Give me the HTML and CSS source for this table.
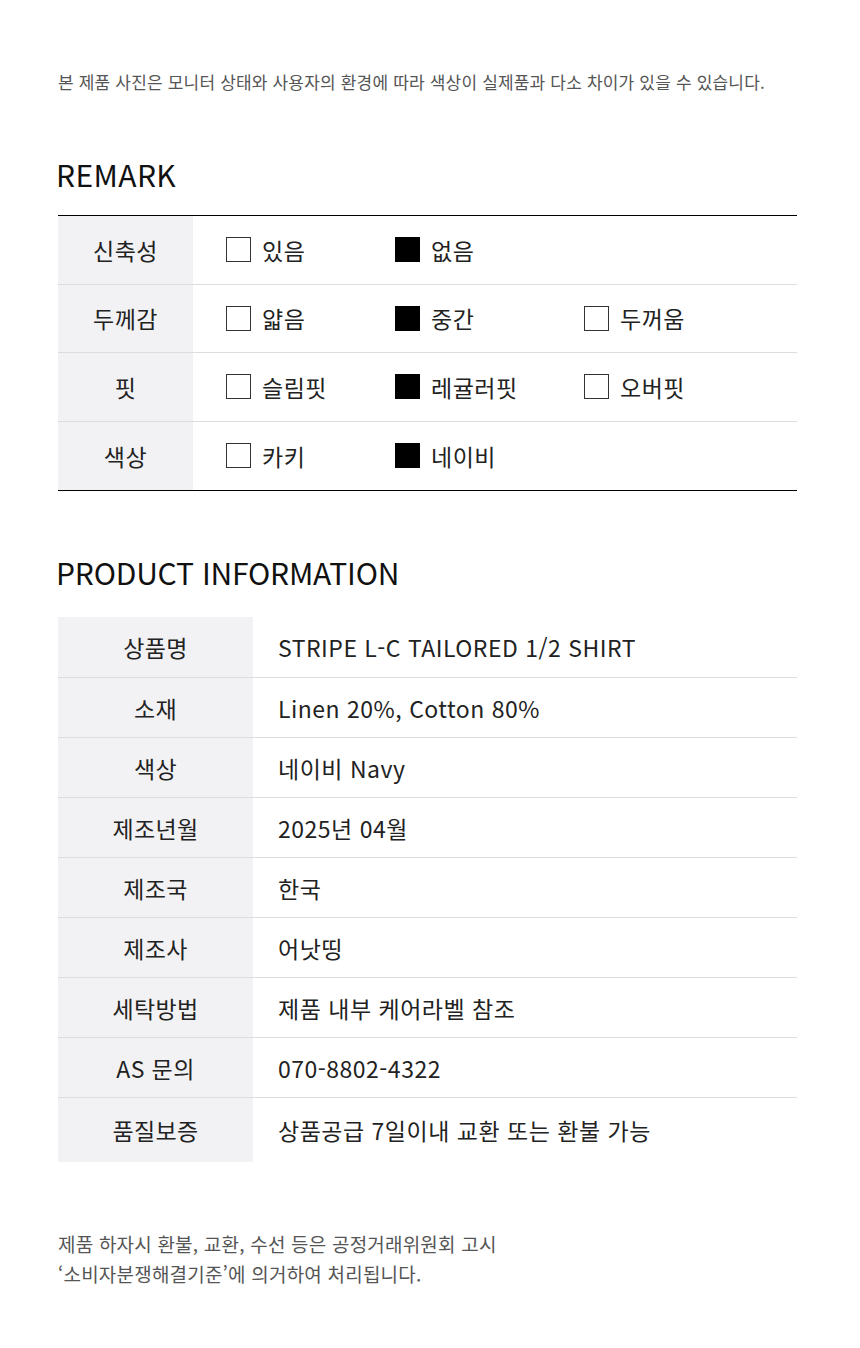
FILE: index.html
```html
<!DOCTYPE html>
<html lang="ko">
<head>
<meta charset="utf-8">
<link rel="stylesheet" href="styles.css">
</head>
<body>
<div class="page">
  <p class="notice">본 제품 사진은 모니터 상태와 사용자의 환경에 따라 색상이 실제품과 다소 차이가 있을 수 있습니다.</p>

  <h2 class="title remark-title">REMARK</h2>
  <div class="remark">
    <div class="r-row">
      <div class="r-label">신축성</div>
      <div class="r-opts">
        <span class="opt"><i class="box"></i>있음</span>
        <span class="opt"><i class="box on"></i>없음</span>
      </div>
    </div>
    <div class="r-row">
      <div class="r-label">두께감</div>
      <div class="r-opts">
        <span class="opt"><i class="box"></i>얇음</span>
        <span class="opt"><i class="box on"></i>중간</span>
        <span class="opt"><i class="box"></i>두꺼움</span>
      </div>
    </div>
    <div class="r-row">
      <div class="r-label">핏</div>
      <div class="r-opts">
        <span class="opt"><i class="box"></i>슬림핏</span>
        <span class="opt"><i class="box on"></i>레귤러핏</span>
        <span class="opt"><i class="box"></i>오버핏</span>
      </div>
    </div>
    <div class="r-row">
      <div class="r-label">색상</div>
      <div class="r-opts">
        <span class="opt"><i class="box"></i>카키</span>
        <span class="opt"><i class="box on"></i>네이비</span>
      </div>
    </div>
  </div>

  <h2 class="title info-title">PRODUCT INFORMATION</h2>
  <div class="info">
    <div class="i-row"><div class="i-label">상품명</div><div class="i-val">STRIPE L-C TAILORED 1/2 SHIRT</div></div>
    <div class="i-row"><div class="i-label">소재</div><div class="i-val">Linen 20%, Cotton 80%</div></div>
    <div class="i-row"><div class="i-label">색상</div><div class="i-val">네이비 Navy</div></div>
    <div class="i-row"><div class="i-label">제조년월</div><div class="i-val">2025년 04월</div></div>
    <div class="i-row"><div class="i-label">제조국</div><div class="i-val">한국</div></div>
    <div class="i-row"><div class="i-label">제조사</div><div class="i-val">어낫띵</div></div>
    <div class="i-row"><div class="i-label">세탁방법</div><div class="i-val">제품 내부 케어라벨 참조</div></div>
    <div class="i-row"><div class="i-label">AS 문의</div><div class="i-val">070-8802-4322</div></div>
    <div class="i-row last"><div class="i-label">품질보증</div><div class="i-val">상품공급 7일이내 교환 또는 환불 가능</div></div>
  </div>

  <p class="footnote">제품 하자시 환불, 교환, 수선 등은 공정거래위원회 고시<br>‘소비자분쟁해결기준’에 의거하여 처리됩니다.</p>
</div>
</body>
</html>
```

FILE: styles.css
```css
* { box-sizing: border-box; }
html, body { margin: 0; padding: 0; background: #fff; }
body {
  font-family: "Noto Sans CJK KR", "Noto Sans", sans-serif;
  color: #222;
}
.page {
  width: 860px;
  padding: 68px 63px 0 58px;
}
.notice {
  margin: 0;
  font-size: 17px;
  line-height: 28px;
  color: #555;
  letter-spacing: 0.18px;
}
.title {
  margin: 0 0 0 -2px;
  font-weight: 400;
  font-size: 30px;
  line-height: 40px;
  color: #111;
}
.remark-title { margin-top: 58px; letter-spacing: 0.4px; }
.remark {
  margin-top: 21px;
  border-top: 1px solid #000;
  border-bottom: 1px solid #000;
}
.r-row {
  display: flex;
  height: 68.5px;
  border-bottom: 1px solid #ddd;
}
.r-row:last-child { border-bottom: 0; }
.r-label {
  width: 135px;
  background: #f2f2f4;
  display: flex;
  align-items: center;
  justify-content: center;
  font-size: 23px;
  letter-spacing: 0.5px;
  color: #222;
}
.r-opts {
  display: grid;
  grid-template-columns: 169px 189px auto;
  align-items: center;
  padding-left: 33px;
  flex: 1;
}
.opt {
  display: flex;
  align-items: center;
  font-size: 23px;
  letter-spacing: 0.5px;
  color: #222;
}
.box {
  width: 25px;
  height: 25px;
  border: 1px solid #333;
  background: #fff;
  margin-right: 11px;
  flex: none;
}
.box.on { background: #000; border-color: #000; }
.info-title { margin-top: 61px; letter-spacing: -0.2px; }
.info { margin-top: 25px; }
.i-row {
  display: flex;
  height: 60px;
  border-bottom: 1px solid #ddd;
}
.i-row:first-child { height: 61px; }
.i-row.last { border-bottom: 0; height: 64px; }
.i-label {
  width: 195px;
  background: #f2f2f4;
  display: flex;
  align-items: center;
  justify-content: center;
  font-size: 23px;
  letter-spacing: 0.4px;
  color: #222;
}
.i-val {
  flex: 1;
  display: flex;
  align-items: center;
  padding-left: 25px;
  font-size: 23px;
  letter-spacing: 0.5px;
  color: #222;
}
.footnote {
  margin: 67px 0 0;
  font-size: 19px;
  line-height: 30px;
  color: #555;
  letter-spacing: 0.2px;
}
```
